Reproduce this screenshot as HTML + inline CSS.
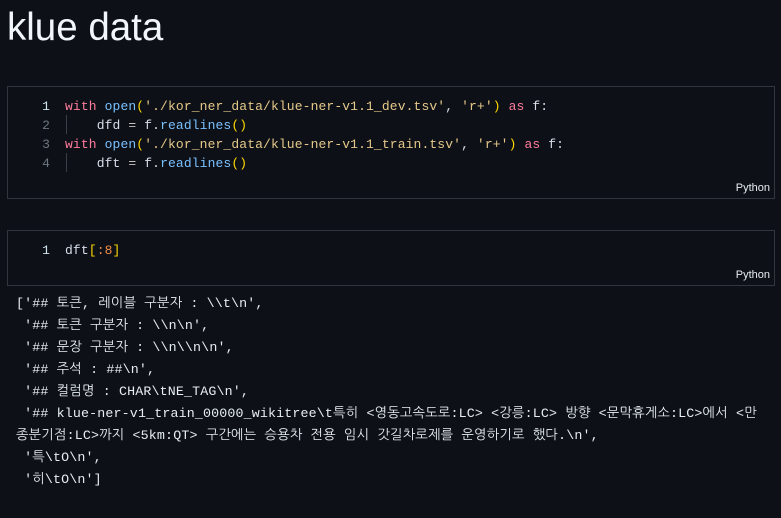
<!DOCTYPE html>
<html><head><meta charset="utf-8"><style>
body{margin:0;background:#0d1117;width:781px;height:518px;overflow:hidden;font-family:"Liberation Sans",sans-serif;color:#e6edf3}
h1{position:absolute;left:7px;top:6px;margin:0;font-weight:400;font-size:38.5px;color:#f0f6fc}
.cell{position:absolute;left:7px;width:768px;border:1px solid #30363d;background:#0d1117;box-sizing:border-box}
.code{position:absolute;left:0;top:10px;font-family:"Liberation Mono",monospace;font-size:13px;letter-spacing:0.12px;line-height:19px;white-space:pre}
.ln{display:inline-block;width:42px;text-align:right;color:#6e7681;margin-right:15px}
.ln.a{color:#d2e4f0}
.k{color:#ff7b9c}.f{color:#79c0ff}.s{color:#e6c88a}.p{color:#ffd700}.v{color:#d8dee9}.o{color:#c3c3c3}.n{color:#f08d49}
.bar{position:relative}
.bar::before{content:"";position:absolute;left:1px;top:-3px;height:19px;border-left:1px solid #3a3f47}
.py{position:absolute;right:4px;bottom:4px;font-size:11px;color:#e6edf3}
.out{position:absolute;left:16px;top:293px;font-family:"Liberation Mono","NanumGothic",monospace;font-size:13.3px;letter-spacing:0.15px;line-height:22px;white-space:pre;color:#e6edf3}
</style></head><body>
<h1>klue data</h1>
<div class="cell" style="top:86px;height:113px">
<div class="code"><span class="ln a">1</span><span class="k">with</span> <span class="f">open</span><span class="p">(</span><span class="s">'./kor_ner_data/klue-ner-v1.1_dev.tsv'</span><span class="v">, </span><span class="s">'r+'</span><span class="p">)</span> <span class="k">as</span> <span class="v">f:</span>
<span class="ln">2</span><span class="bar"></span>    <span class="v">dfd</span> <span class="o">=</span> <span class="v">f.</span><span class="f">readlines</span><span class="p">()</span>
<span class="ln">3</span><span class="k">with</span> <span class="f">open</span><span class="p">(</span><span class="s">'./kor_ner_data/klue-ner-v1.1_train.tsv'</span><span class="v">, </span><span class="s">'r+'</span><span class="p">)</span> <span class="k">as</span> <span class="v">f:</span>
<span class="ln">4</span><span class="bar"></span>    <span class="v">dft</span> <span class="o">=</span> <span class="v">f.</span><span class="f">readlines</span><span class="p">()</span></div>
<div class="py">Python</div>
</div>
<div class="cell" style="top:230px;height:56px">
<div class="code"><span class="ln a">1</span><span class="v">dft</span><span class="p">[</span><span class="n">:8</span><span class="p">]</span></div>
<div class="py">Python</div>
</div>
<div class="out">['## 토큰, 레이블 구분자 : \\t\n',
 '## 토큰 구분자 : \\n\n',
 '## 문장 구분자 : \\n\\n\n',
 '## 주석 : ##\n',
 '## 컬럼명 : CHAR\tNE_TAG\n',
 '## klue-ner-v1_train_00000_wikitree\t특히 &lt;영동고속도로:LC&gt; &lt;강릉:LC&gt; 방향 &lt;문막휴게소:LC&gt;에서 &lt;만
종분기점:LC&gt;까지 &lt;5km:QT&gt; 구간에는 승용차 전용 임시 갓길차로제를 운영하기로 했다.\n',
 '특\tO\n',
 '히\tO\n']</div>
</body></html>
